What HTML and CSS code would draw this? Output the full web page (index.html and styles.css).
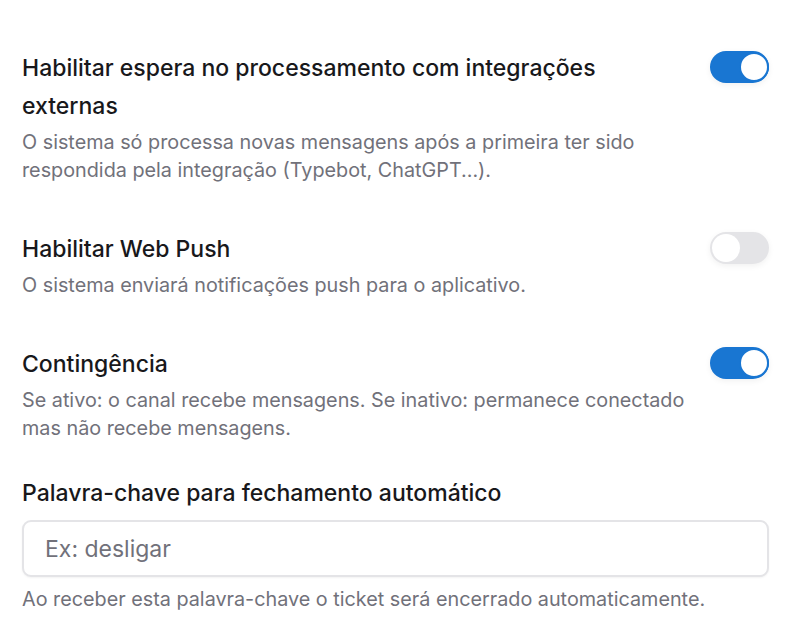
FILE: index.html
```html
<!DOCTYPE html>
<html lang="pt-BR">
<head>
  <meta charset="UTF-8">
  <title>Configurações</title>
  <link rel="stylesheet" href="styles.css">
</head>
<body>
  <div class="settings">

    <!-- espera integrações -->
    <div class="setting">
      <div class="setting-text">
        <h3>Habilitar espera no processamento com integrações externas</h3>
        <p>O sistema só processa novas mensagens após a primeira ter sido respondida pela integração (Typebot, ChatGPT...).</p>
      </div>
      <label class="switch">
        <input type="checkbox" checked>
        <span class="slider"></span>
      </label>
    </div>

    <!-- web push -->
    <div class="setting">
      <div class="setting-text">
        <h3>Habilitar Web Push</h3>
        <p>O sistema enviará notificações push para o aplicativo.</p>
      </div>
      <label class="switch">
        <input type="checkbox">
        <span class="slider"></span>
      </label>
    </div>

    <!-- contingencia -->
    <div class="setting">
      <div class="setting-text">
        <h3>Contingência</h3>
        <p>Se ativo: o canal recebe mensagens. Se inativo: permanece conectado mas não recebe mensagens.</p>
      </div>
      <label class="switch">
        <input type="checkbox" checked>
        <span class="slider"></span>
      </label>
    </div>

    <!-- palavra-chave -->
    <div class="field">
      <label for="keyword">Palavra-chave para fechamento automático</label>
      <input type="text" id="keyword" placeholder="Ex: desligar">
      <p class="hint">Ao receber esta palavra-chave o ticket será encerrado automaticamente.</p>
    </div>

  </div>
</body>
</html>
```

FILE: styles.css
```css
body {
  margin: 0;
  font-family: Inter, "Noto Sans", sans-serif;
  background: #ffffff;
  color: #18181b;
}
.settings {
  padding: 49px 21px 20px 22px;
}
.setting {
  display: flex;
  align-items: flex-start;
  gap: 18px;
}
.setting + .setting {
  margin-top: 46px;
}
.setting-text {
  flex: 1;
}
.setting h3 {
  margin: 0 0 3px;
  font-size: 23px;
  font-weight: 500;
  line-height: 38px;
}
.setting p,
.hint {
  margin: 0;
  font-size: 19.8px;
  line-height: 28px;
  color: #71717a;
}
.switch {
  position: relative;
  width: 59px;
  height: 32px;
  margin-top: 2px;
  flex-shrink: 0;
}
.switch input {
  display: none;
}
.slider {
  position: absolute;
  inset: 0;
  border-radius: 16px;
  background: #e4e4e7;
  box-shadow: 0 2px 6px rgba(0,0,0,0.06);
  cursor: pointer;
}
.slider::before {
  content: "";
  position: absolute;
  top: 2px;
  left: 2px;
  width: 28px;
  height: 28px;
  border-radius: 50%;
  background: white;
  box-sizing: border-box;
}
.switch input:checked + .slider {
  background: #1976d2;
}
.switch input:checked + .slider::before {
  left: 29px;
  top: 1px;
  width: 30px;
  height: 30px;
  border: 2px solid #1976d2;
}
.field {
  margin-top: 37px;
}
.field label {
  display: block;
  font-size: 23px;
  font-weight: 500;
  line-height: 28px;
  margin-bottom: 13px;
}
.field input {
  display: block;
  width: 100%;
  height: 57px;
  box-sizing: border-box;
  padding: 0 21px;
  border: 2px solid #e4e4e7;
  border-radius: 9px;
  font-family: inherit;
  font-size: 23px;
  color: #18181b;
  box-shadow: 0 1px 2px rgba(0,0,0,0.05);
}
.field input::placeholder {
  color: #71717a;
}
.hint {
  margin-top: 8px;
}
```
